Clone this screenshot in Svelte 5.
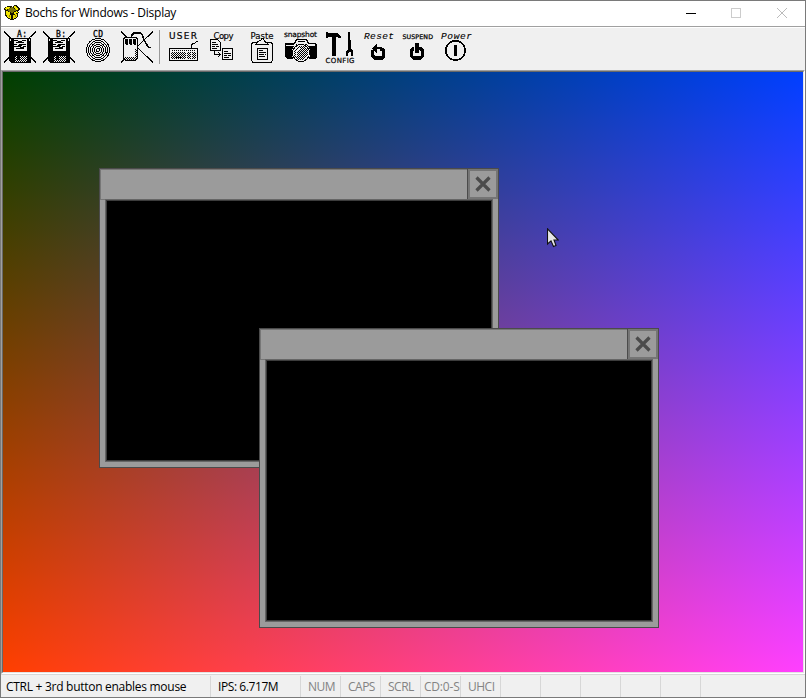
<script>
  const locks = ['NUM', 'CAPS', 'SCRL', 'CD:0-S', 'UHCI', '', '', '', '', ''];
  const windows = [{ x: 96, y: 96 }, { x: 256, y: 256 }];
  const drives = ['A:', 'B:'];
</script>

<div class="frame">
  <header>
    <svg class="logo" width="16" height="16" viewBox="0 0 16 16" shape-rendering="crispEdges">
      <path d="M1 6L3 5H13L14 6V11L13 13L8 15.5L3 13L1 10Z" fill="#171700" />
      <path d="M2 8L7 10V14L3 12ZM9 10L13 9V12L9 14Z" fill="#eee000" />
      <path d="M0 4L1 2L5 1H7L8 2L10 0H12L16 3V5L14 6L15 8L10 10L8 8L4 9L0 7L1 6Z" fill="#171700" />
      <path d="M1 4L2 2H6L4 4L2 5ZM9 2L11 1L15 4L13 5ZM1 7L3 6L7 8L4 9ZM9 8L13 6L14 8L10 9Z" fill="#f4e800" />
      <path d="M3 5L8 2L13 5L8 8Z" fill="#77710b" />
      <path d="M5 10V12M11 10V12" stroke="#8d8500" />
    </svg>
    <span class="title">Bochs for Windows - Display</span>
    <svg class="controls" width="119" height="24" viewBox="0 0 119 24" shape-rendering="crispEdges">
      <path d="M0 11.5H10" stroke="#000" />
      <rect x="45.5" y="6.5" width="9" height="9" fill="none" stroke="#ccc" />
      <path d="M91 6L101 16M101 6L91 16" stroke="#bbb" shape-rendering="auto" />
    </svg>
  </header>

  <nav>
    <svg width="0" height="0" class="defs">
      <defs>
        <pattern id="dither" width="2" height="2" patternUnits="userSpaceOnUse">
          <rect width="1" height="1" /><rect x="1" y="1" width="1" height="1" />
        </pattern>
      </defs>
    </svg>
    {#each drives as drive}
      <svg class="icon" viewBox="0 0 32 32">
        <path d="M0 .5L32 31.5M32 .5L0 31.5" class="line" />
        <rect x="11" width="12" height="7" fill="#f0f0f0" />
        <text x="13" y="6" textLength="10" class="mono">{drive}</text>
        <path d="M5 7H27V32H7L5 30Z" />
        <rect x="10" y="8" width="13" height="12" fill="#f0f0f0" />
        <path d="M10 9.5H14M18 9.5H22M12 11.5H20M10 13.5H13M15 13.5H22M10 15.5H17M19 15.5H22M12 17.5H20M14 10.5H18M14 14.5H18M16 16.5H20" class="line" />
        <path d="M6 8h1v2h-1zM25 8h1v2h-1z" fill="#f0f0f0" />
        <rect x="11" y="25" width="12" height="6" fill="#f0f0f0" />
        <rect x="11" y="25" width="12" height="6" fill="url(#dither)" />
        <rect x="13" y="25" width="3" height="4" />
      </svg>
    {/each}
    <svg class="icon" viewBox="0 0 32 32">
      <text x="11" y="6" textLength="10" class="mono">CD</text>
      <g class="line"><circle cx="16" cy="19" r="11.5" /><circle cx="16" cy="19" r="9.5" /><circle cx="16" cy="19" r="7.5" /><circle cx="16" cy="19" r="5.5" /><circle cx="16" cy="19" r="3.5" /><circle cx="16" cy="19" r="1.5" /></g>
    </svg>
    <svg class="icon" viewBox="0 0 32 32">
      <path d="M0 .5L32 31.5M32 .5L0 31.5" class="line" />
      <path d="M4 6.5H15L16.5 8V27L14 29.5H5L2.5 27V8Z" fill="#f0f0f0" stroke="#000" />
      <path d="M4 8H7V14H5L4 13ZM8 8H11V14H9L8 13ZM12 8H15V14H13L12 13Z" />
      <path d="M3 26h13v2h-1v1h-11z" fill="url(#dither)" />
      <path d="M14 18h2v8h-2z" fill="url(#dither)" />
      <path d="M10.5 6.5V4.5L13 2H19.5L21.5 4L23 9L26 14L28 16.5H30" class="line cord" />
    </svg>
    <i class="divider"></i>
    <svg class="icon" viewBox="0 0 32 32">
      <text x="2" y="7.5" textLength="28" class="user">USER</text>
      <path d="M2.5 17.5H30.5V29.5H2.5ZM24.5 17V14L26 12.5L28 12L29.5 10.5H31" class="line" />
      <path d="M5 19.5H28" class="line" stroke-dasharray="1 1" />
      <rect x="4" y="21" width="15" height="7" fill="url(#dither)" />
      <rect x="20" y="21" width="4" height="7" fill="url(#dither)" />
      <rect x="25" y="21" width="4" height="7" fill="url(#dither)" />
      <path d="M8 26h6v1h-6z" />
    </svg>
    <svg class="icon" viewBox="0 0 32 32">
      <text x="7.5" y="7.5" textLength="20" class="hand">Copy</text>
      <path d="M4.5 8.5H11.5L14.5 11.5V19.5H4.5ZM6 11.5H10M6 13.5H12M6 15.5H9M10 15.5H13M6 17.5H11M8.5 20V23.5H15M12 21L14.5 23.5L12 26M16.5 17.5H26.5V28.5H16.5ZM18 20.5H22M18 22.5H25M18 24.5H21M22 24.5H25M18 26.5H23" class="line" />
    </svg>
    <svg class="icon" viewBox="0 0 32 32">
      <text x="5.5" y="7.5" textLength="23" class="hand">Paste</text>
      <path d="M8 11.5H26L27.5 13V29L26 31.5H8L6.5 29V13ZM12.5 17.5H22.5V28.5H12.5ZM14 19.5H18M14 21.5H21M14 23.5H19M20 23.5H21M14 25.5H20" class="line" />
      <path d="M10.5 13.5H23.5L20 10.5L18 8V7H16V9L13 10.5Z" fill="#f0f0f0" stroke="#000" />
    </svg>
    <svg class="icon" viewBox="0 0 32 32">
      <text x="0" y="5.5" textLength="33" class="snap">snapshot</text>
      <path d="M1 12H10L12 8H23L25 12H32L33 14V26L31 28H3L1 26V14Z" />
      <path d="M13 9H22L24 13H31V15H25L22 13H13L10 15H2V14H9L12 12ZM3 10h5v1h-5zM26 10h5v1h-5z" fill="#f0f0f0" />
      <path d="M14 10.5H21" class="line" />
      <circle cx="17" cy="22" r="9.5" fill="#f0f0f0" />
      <circle cx="17" cy="22" r="8.5" fill="#f0f0f0" stroke="#000" />
      <circle cx="17" cy="22" r="7" fill="url(#dither)" />
      <path d="M12 20L15 17H17L13 22V25H12Z" fill="#f0f0f0" />
    </svg>
    <svg class="icon" viewBox="0 0 32 32">
      <path d="M3 1H5V2H14L18 5V7H16L13 5.5V25H9V6H5V7H3ZM25 1H27V9L28 10V18L30 20V25H28V22L27 21H26L25 22V25H23V20L25 18Z" />
      <text x="2.5" y="31.5" textLength="29" class="config">CONFIG</text>
    </svg>
    <svg class="icon" viewBox="0 0 32 32">
      <text x="2" y="7.5" textLength="30" class="script">Reset</text>
      <path d="M15 13V16H20V18H15V22H14L10 18V17L14 13ZM9 19H12V24L13 25H19L20 24V20H18V17H21L23 19V26L20 29H12L9 26Z" />
    </svg>
    <svg class="icon" viewBox="0 0 32 32">
      <text x="1.5" y="8" textLength="30.5" class="suspend">SUSPEND</text>
      <path d="M9 18L11 16H13V19L12 20V25H20V20L18 19V16H20L23 19V26L20 28.5H12L9 26ZM14 12H18V22H14Z" />
    </svg>
    <svg class="icon" viewBox="0 0 32 32">
      <text x="1" y="7.5" textLength="31" class="script">Power</text>
      <circle cx="15.5" cy="19.5" r="9.7" fill="none" stroke="#000" stroke-width="1.7" />
      <rect x="14" y="14" width="3" height="11" />
    </svg>
  </nav>

  <main>
    <div class="screen">
      {#each windows as w}
        <section class="win" style="left:{w.x}px;top:{w.y}px">
          <div class="bar">
            <div class="grip"></div>
            <div class="close">
              <svg width="16" height="16" viewBox="0 0 16 16"><path d="M1.5 1.5L14.5 14.5M14.5 1.5L1.5 14.5" stroke="#4b4b4b" stroke-width="3.2" /></svg>
            </div>
          </div>
          <div class="client"></div>
        </section>
      {/each}
      <svg class="pointer" width="12" height="20" viewBox="0 0 12 20">
        <path d="M.5 .8V16L4 12.8L6.5 18.5L9 17.5L7 12H11.3Z" fill="#e6e6e6" stroke="#111" stroke-width="1.1" />
      </svg>
    </div>
  </main>

  <footer>
    <span class="cell hint">CTRL + 3rd button enables mouse</span>
    <span class="cell ips">IPS: 6.717M</span>
    {#each locks as l, i}
      <span class="cell lock" class:tight={i === 3}>{l}</span>
    {/each}
  </footer>
</div>

<style>
  .frame {
    box-sizing: border-box;
    width: 806px;
    height: 698px;
    border: 1px solid #7a7a7a;
    background: #f0f0f0;
    display: flex;
    flex-direction: column;
    font: 12px "Open Sans", "Noto Sans", sans-serif;
    overflow: hidden;
  }
  header {
    height: 25px;
    flex: none;
    background: #fff;
    border-bottom: 1px solid #a0a0a0;
    display: flex;
    align-items: center;
  }
  .logo { margin: 0 5px 1px 3px; }
  .title { flex: 1; letter-spacing: -0.25px; white-space: nowrap; padding-bottom: 2px; }
  nav {
    box-sizing: border-box;
    height: 43px;
    flex: none;
    border-top: 1px solid #fff;
    display: flex;
    padding: 3px 0 0 3px;
    gap: 7px;
  }
  .defs { position: absolute; }
  .icon { width: 32px; height: 32px; flex: none; overflow: visible; shape-rendering: crispEdges; }
  .line { fill: none; stroke: #000; stroke-width: 1; }
  .cord { stroke-width: 1.6; }
  .divider { width: 1px; height: 34px; background: #9a9a9a; margin: -1px 0 0 -1px; }
  text { fill: #000; }
  .mono { font: 8px "DejaVu Sans Mono", monospace; stroke: #000; stroke-width: 0.3; }
  .user { font: 9px "DejaVu Sans", sans-serif; stroke: #000; stroke-width: 0.2; }
  .hand { font: 8.5px "DejaVu Sans", sans-serif; stroke: #000; stroke-width: 0.15; }
  .snap { font: 7.5px "DejaVu Sans", sans-serif; stroke: #000; stroke-width: 0.2; }
  .config { font: 7px "DejaVu Sans", sans-serif; stroke: #000; stroke-width: 0.2; }
  .script { font: italic 9.5px "Liberation Mono", monospace; stroke: #000; stroke-width: 0.1; }
  .suspend { font: 6.3px "DejaVu Sans", sans-serif; stroke: #000; stroke-width: 0.25; }
  main {
    flex: none;
    width: 802px;
    height: 602px;
    border-style: solid;
    border-width: 1px;
    border-color: #a0a0a0 #fff #fff #a0a0a0;
  }
  .screen {
    position: relative;
    width: 800px;
    height: 600px;
    border-style: solid;
    border-width: 1px;
    border-color: #696969 #e3e3e3 #e3e3e3 #696969;
    background: linear-gradient(to bottom, #000, #f00), linear-gradient(to right, #003f00, #003fff);
    background-blend-mode: screen;
  }
  .win {
    position: absolute;
    box-sizing: border-box;
    width: 400px;
    height: 300px;
    border: 1px solid #4b4b4b;
    background: #9b9b9b;
    display: flex;
    flex-direction: column;
  }
  .bar { height: 31px; display: flex; flex: none; }
  .grip { flex: 1; border: 1px solid #777; border-width: 1px 0 1px 1px; box-sizing: border-box; }
  .close {
    box-sizing: border-box;
    width: 30px;
    height: 30px;
    border: 2px solid #757575;
    box-shadow: -1px 0 #4b4b4b;
    display: flex;
    align-items: center;
    justify-content: center;
  }
  .client {
    flex: 1;
    margin: -1px 5px 5px;
    background: #000;
    border: 1px solid #666;
    box-shadow: inset 0 0 0 1px #3c3c3c;
  }
  .pointer { position: absolute; left: 544px; top: 156px; }
  footer {
    flex: 1;
    border-top: 1px solid #d7d7d7;
    display: flex;
    padding: 1px 0 1px;
    box-sizing: border-box;
  }
  .cell {
    box-sizing: border-box;
    border-right: 1px solid #d7d7d7;
    line-height: 21px;
    white-space: nowrap;
    overflow: hidden;
  }
  .hint { width: 210px; padding-left: 5px; letter-spacing: -0.28px; }
  .ips { width: 90px; padding-left: 7px; letter-spacing: -0.42px; }
  .lock { width: 40px; padding-left: 7px; color: #838383; letter-spacing: -0.5px; }
  .tight { padding-left: 3px; letter-spacing: -0.2px; }
</style>
